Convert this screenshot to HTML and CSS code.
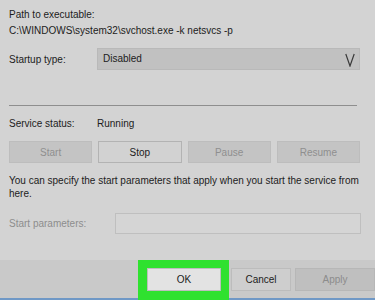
FILE: index.html
```html
<!DOCTYPE html>
<html>
<head>
<meta charset="utf-8">
<link rel="stylesheet" href="styles.css">
</head>
<body>
<div class="dialog">
  <div class="panel">
    <p class="line">Path to executable:</p>
    <p class="line">C:\WINDOWS\system32\svchost.exe -k netsvcs -p</p>
    <div class="row startup">
      <span class="label">Startup type:</span>
      <div class="select">
        <span>Disabled</span>
        <svg class="chev" width="10" height="14" viewBox="0 0 10 14"><polyline points="0.8,1 5,13 9.2,1" fill="none" stroke="#3a3a3a" stroke-width="1.2"/></svg>
      </div>
    </div>
    <div class="sep"></div>
    <div class="row status">
      <span class="label">Service status:</span>
      <span>Running</span>
    </div>
    <div class="btns">
      <div class="btn disabled">Start</div>
      <div class="btn active">Stop</div>
      <div class="btn disabled">Pause</div>
      <div class="btn disabled">Resume</div>
    </div>
    <p class="desc">You can specify the start parameters that apply when you start the service from<br>here.</p>
    <div class="row params">
      <span class="label-wide muted">Start parameters:</span>
      <div class="input"></div>
    </div>
  </div>
  <div class="footer">
    <div class="ok-wrap"><div class="fbtn ok">OK</div></div>
    <div class="fbtn cancel">Cancel</div>
    <div class="fbtn apply">Apply</div>
  </div>
</div>
</body>
</html>
```
FILE: styles.css
```css
html, body {
  margin: 0;
  padding: 0;
}
body {
  width: 375px;
  height: 300px;
  overflow: hidden;
  background: #d3d3d3;
  font-family: "Liberation Sans", Arial, sans-serif;
  font-size: 10px;
  color: #1c1c1c;
}
.dialog {
  display: flex;
  flex-direction: column;
  height: 300px;
}
.panel {
  padding: 7px 0 0 9px;
  height: 253px;
}
.line {
  margin: 0;
  line-height: 16px;
  white-space: nowrap;
}
.row {
  display: flex;
  align-items: center;
}
.label {
  width: 88px;
  flex: none;
}
.startup {
  margin-top: 9px;
}
.select {
  width: 263px;
  height: 22px;
  box-sizing: border-box;
  background: #c1c1c1;
  border: 1px solid #b9b9b9;
  display: flex;
  align-items: center;
  justify-content: space-between;
  padding: 0 4px 0 5px;
  line-height: 20px;
}
.chev {
  display: block;
  margin-top: 1px;
}
.sep {
  margin-top: 35px;
  width: 348px;
  height: 1px;
  background: #8e8e8e;
}
.status {
  margin-top: 10px;
  line-height: 16px;
}
.btns {
  margin-top: 9px;
  width: 351px;
  display: grid;
  grid-template-columns: repeat(4, 1fr);
  gap: 6px;
}
.btn {
  height: 22px;
  box-sizing: border-box;
  display: flex;
  align-items: center;
  justify-content: center;
}
.btn.disabled {
  background: #c4c4c4;
  border: 1px solid #bdbdbd;
  color: #8f8f8f;
}
.btn.active {
  background: #d2d2d2;
  border: 1px solid #b3b3b3;
  color: #1c1c1c;
}
.desc {
  margin: 11px 0 0;
  line-height: 13px;
  white-space: nowrap;
}
.params {
  margin-top: 13px;
}
.label-wide {
  width: 106px;
  flex: none;
}
.muted {
  color: #8d8d8d;
}
.input {
  width: 246px;
  height: 21px;
  box-sizing: border-box;
  border: 1px solid #bfbfbf;
  background: #d5d5d5;
}
.footer {
  flex: none;
  height: 40px;
  box-sizing: border-box;
  background: #c9c9c9;
  border-bottom: 2px solid #6f98c6;
  display: flex;
  align-items: flex-start;
  padding-left: 138px;
  margin-top: 7px;
}
.ok-wrap {
  padding: 8px 8px 9px 9px;
  background: #2fe12f;
  height: 40px;
  box-sizing: border-box;
  position: relative;
  z-index: 1;
}
.fbtn {
  height: 23px;
  box-sizing: border-box;
  display: flex;
  align-items: center;
  justify-content: center;
  font-size: 10px;
}
.ok {
  width: 74px;
  background: #e3e3e3;
  border: 1px solid #bdbdbd;
}
.cancel {
  margin-top: 8px;
  margin-left: 2px;
  width: 71px;
  background: #cecece;
  border: 1px solid #bcbcbc;
}
.apply {
  margin-top: 8px;
  margin-left: 4px;
  width: 80px;
  flex: none;
  background: #bfbfbf;
  border: 1px solid #b7b7b7;
  color: #8c8c8c;
}
```
